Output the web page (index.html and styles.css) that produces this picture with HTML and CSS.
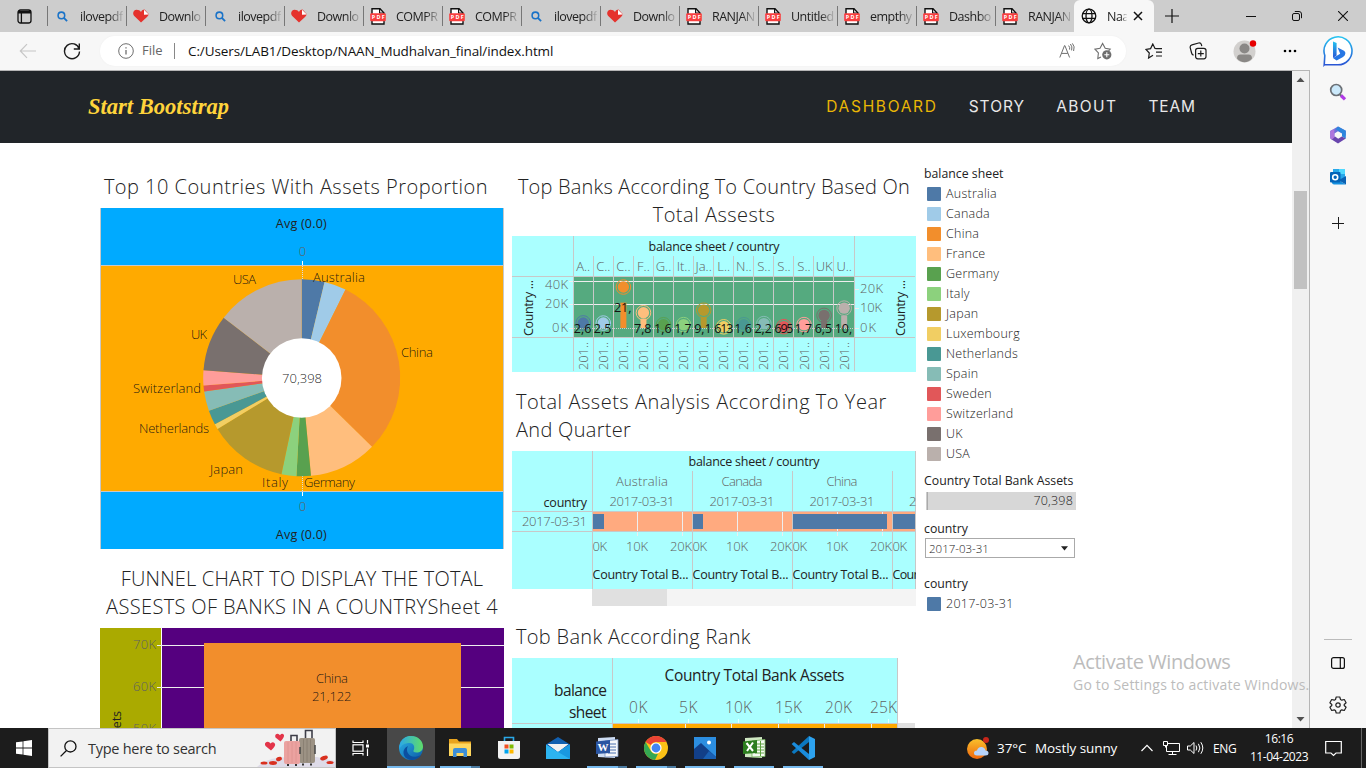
FILE: index.html
```html
<!DOCTYPE html>
<html lang="en">
<head>
<meta charset="utf-8">
<title>Naan Mudhalvan</title>
<link rel="stylesheet" href="styles.css">
</head>
<body>
<svg class="defs" width="0" height="0">
  <defs>
    <linearGradient id="gEdge" x1="0" y1="0" x2="1" y2="1"><stop offset="0" stop-color="#2bb4e8"/><stop offset="1" stop-color="#0c59a4"/></linearGradient>
    <linearGradient id="gEdge2" x1="0" y1="0" x2="1" y2="0"><stop offset="0" stop-color="#2ba8e8"/><stop offset="1" stop-color="#5fdc68"/></linearGradient>
    <linearGradient id="gBing" x1="0" y1="0" x2="0" y2="1"><stop offset="0" stop-color="#25c3f0"/><stop offset="1" stop-color="#2a55d4"/></linearGradient>
    <linearGradient id="gSun" x1="0" y1="0" x2="0" y2="1"><stop offset="0" stop-color="#f9c02c"/><stop offset="1" stop-color="#f0660c"/></linearGradient>
  </defs>
  <symbol id="search" viewBox="0 0 12 12"><circle cx="4.8" cy="4.8" r="3.6" fill="none" stroke="#1a73c8" stroke-width="1.7"/><path d="M7.5 7.5 11 11" stroke="#1a73c8" stroke-width="2"/></symbol>
  <symbol id="heart" viewBox="0 0 16 14"><path d="M8 13.6 1 6.8C-1 4 .8.8 3.6.8 5.6.8 7 1.6 8 3 9 1.4 10 .6 11.6.6L15.6 5C15.6 6.2 15 7 14 8z" fill="#e5322d"/><path d="M11 .8 15.8 5.4 11 5.8z" fill="#fff"/></symbol>
  <symbol id="pdf" viewBox="0 0 16 17"><path d="M2 .8h8L14 5v11H2z" fill="#fff" stroke="#111" stroke-width="1.4"/><path d="M9.6.8V5H14" fill="none" stroke="#111" stroke-width="1.2"/><rect x=".2" y="5.2" width="15.6" height="8" rx="1" fill="#f83f3f"/><text x="8" y="11.2" font-size="5.4" font-weight="700" fill="#fff" text-anchor="middle" textLength="12.6">PDF</text></symbol>
</svg>

<div class="tabstrip">
  <div class="tab-menu"><svg width="15" height="15" viewBox="0 0 15 15" fill="none" stroke="#111" stroke-width="1.3"><rect x="1" y="1" width="13" height="13" rx="2.5"/><path d="M1 3.2h13" stroke-width="2.6"/><path d="M4.4 4v10"/></svg></div>
  <div class="tab"><svg class="i-s"><use href="#search"/></svg><span>ilovepdf</span></div>
  <div class="tab"><svg class="i-h"><use href="#heart"/></svg><span>Downlo</span></div>
  <div class="tab"><svg class="i-s"><use href="#search"/></svg><span>ilovepdf</span></div>
  <div class="tab"><svg class="i-h"><use href="#heart"/></svg><span>Downlo</span></div>
  <div class="tab"><svg class="i-p"><use href="#pdf"/></svg><span>COMPR</span></div>
  <div class="tab"><svg class="i-p"><use href="#pdf"/></svg><span>COMPR</span></div>
  <div class="tab"><svg class="i-s"><use href="#search"/></svg><span>ilovepdf</span></div>
  <div class="tab"><svg class="i-h"><use href="#heart"/></svg><span>Downlo</span></div>
  <div class="tab"><svg class="i-p"><use href="#pdf"/></svg><span>RANJAN</span></div>
  <div class="tab"><svg class="i-p"><use href="#pdf"/></svg><span>Untitled</span></div>
  <div class="tab"><svg class="i-p"><use href="#pdf"/></svg><span>empthy</span></div>
  <div class="tab"><svg class="i-p"><use href="#pdf"/></svg><span>Dashbo</span></div>
  <div class="tab"><svg class="i-p"><use href="#pdf"/></svg><span>RANJAN</span></div>
  <div class="tab active">
    <svg width="16" height="16" viewBox="0 0 16 16" fill="none" stroke="#111" stroke-width="1.3"><circle cx="8" cy="8" r="6.8"/><ellipse cx="8" cy="8" rx="3" ry="6.8"/><path d="M1.6 5.7h12.8M1.6 10.3h12.8"/></svg>
    <span>Naa</span>
    <svg class="close" width="10" height="10" viewBox="0 0 10 10" stroke="#111" stroke-width="1.5"><path d="M1 1l8 8M9 1 1 9"/></svg>
  </div>
  <svg class="newtab" width="14" height="14" viewBox="0 0 14 14" stroke="#111" stroke-width="1.2"><path d="M7 0v14M0 7h14"/></svg>
  <div class="winctl">
    <svg width="10" height="10" viewBox="0 0 10 10"><path d="M0 5.5h10" stroke="#111"/></svg>
    <svg width="10" height="10" viewBox="0 0 10 10" fill="none" stroke="#111"><rect x=".5" y="2.5" width="7" height="7" rx="1.5"/><path d="M2.8.5H7Q9.5.5 9.5 3v4.2"/></svg>
    <svg width="10" height="10" viewBox="0 0 10 10" stroke="#111" stroke-width="1.1"><path d="M0 0l10 10M10 0 0 10"/></svg>
  </div>
</div>

<div class="window">
  <div class="main">
    <div class="toolbar">
      <svg class="back" width="18" height="16" viewBox="0 0 18 16" fill="none" stroke="#c6c6c6" stroke-width="1.2"><path d="M17 8H1.5M8 1.2 1.3 8 8 14.8"/></svg>
      <svg class="reload" width="18" height="18" viewBox="0 0 18 18" fill="none" stroke="#1b1b1b" stroke-width="1.4"><path d="M16.2 7A7.5 7.5 0 1 0 16.5 9.5M16.3 1.5V7h-5.5"/></svg>
      <div class="address">
        <svg width="16" height="16" viewBox="0 0 16 16" fill="none" stroke="#6e6e6e"><circle cx="8" cy="8" r="7.3"/><path d="M8 7v4.6M8 4.2v1.4" stroke-width="1.3"/></svg>
        <span class="scheme">File</span>
        <span class="url">C:/Users/LAB1/Desktop/NAAN_Mudhalvan_final/index.html</span>
        <svg class="read" width="16" height="16" viewBox="0 0 16 16" fill="none" stroke="#6e6e6e"><path d="M.8 14.5 5.5 2.6h.4l4.7 11.9M2.6 10.4h6.2M9.6 2.6q1.6 1.6 1 4M11.4 1q2.4 2.6 1.2 6.4M13.4.4q2.8 3 1.2 7.6"/></svg>
        <svg class="fav" width="18" height="18" viewBox="0 0 18 18" fill="none" stroke="#6e6e6e" stroke-width="1.1"><path d="M7 15 3.8 16.5 4.4 11 1 7.2l5-1L8.6 1.4 11.2 6.2l5 1-1.6 1.8"/><circle cx="12.8" cy="12.8" r="4.6" fill="#6e6e6e" stroke="none"/><path d="M12.8 10.3v5M10.3 12.8h5" stroke="#fff"/></svg>
      </div>
      <div class="tools">
        <svg width="18" height="16" viewBox="0 0 18 16" fill="none" stroke="#1b1b1b" stroke-width="1.2"><path d="M8 12.2 3.6 15l.7-5L1 6.4l4.6-.8L7.8 1 10 5.4l1.6.3M10.5 5.6H17M11 9.2h6M11 13h6"/></svg>
        <svg width="18" height="18" viewBox="0 0 18 18" fill="none" stroke="#1b1b1b" stroke-width="1.2"><rect x="6.6" y="6.4" width="10.4" height="10.4" rx="2.2"/><path d="M11.8 8.6v6M8.8 11.6h6M4.6 13.2Q3 12.8 2.6 11L1.2 5.6Q.8 3.4 3 2.8L9.6 1Q11.8.6 12.4 2.6l.4 1.6"/></svg>
        <svg width="24" height="24" viewBox="0 0 24 24"><circle cx="11.5" cy="12.5" r="11" fill="#d2d0ce"/><circle cx="11.5" cy="9.5" r="5" fill="#8a8886"/><path d="M4 19.5q0-4 3.6-4h7.8q3.6 0 3.6 4-3.3 3.8-7.5 3.8T4 19.5z" fill="#8a8886"/><circle cx="20" cy="4.5" r="3.2" fill="#e60000"/></svg>
        <svg width="14" height="4" viewBox="0 0 14 4"><circle cx="2" cy="2" r="1.3"/><circle cx="7" cy="2" r="1.3"/><circle cx="12" cy="2" r="1.3"/></svg>
      </div>
    </div>
    <div class="viewport">
      <div class="page">
        <nav class="nav">
          <svg class="brand" width="146" height="36" viewBox="0 0 146 36"><text x="1" y="25" textLength="141" lengthAdjust="spacingAndGlyphs">Start Bootstrap</text></svg>
          <div class="links"><a class="l1">DASHBOARD</a><a class="l2">STORY</a><a class="l3">ABOUT</a><a class="l4">TEAM</a></div>
        </nav>
        <div class="dash">
          <section class="col">
            <h2 class="t1">Top 10 Countries With Assets Proportion</h2>
            <svg class="chart" id="donut" width="404" height="341" viewBox="100 208 404 341">
              <rect x="100" y="208" width="404" height="341" fill="#0af"/>
              <rect x="100" y="265" width="404" height="227" fill="#fa0"/>
              <path d="M100.5 208v341M503.5 208v341M100 265.5h404M100 491.5h404" stroke="#c8c8c8"/>
              <path d="M302.5 266v14M302.5 476v15" stroke="#ddd" stroke-dasharray="1 1"/>
              <path d="M302.5 261v4M302.5 492v4" stroke="#fff"/>
              <g id="slices"></g>
              <circle cx="301.7" cy="378" r="39.8" fill="#fff"/>
              <g class="dark med" text-anchor="middle"><text x="301.3" y="228.4" textLength="51">Avg (0.0)</text><text x="301.3" y="539.4" textLength="51">Avg (0.0)</text></g>
              <g class="mut" text-anchor="middle"><text x="302.5" y="256">0</text><text x="302.5" y="511">0</text></g>
              <g class="on">
                <text x="233" y="284.3" textLength="23">USA</text><text x="313" y="281.5" textLength="52">Australia</text>
                <text x="191" y="339.3" textLength="16">UK</text><text x="401" y="357.3" textLength="32">China</text>
                <text x="133" y="393.3" textLength="68">Switzerland</text><text x="139" y="433.3" textLength="70">Netherlands</text>
                <text x="210" y="474.3" textLength="33">Japan</text><text x="262" y="486.5" textLength="26">Italy</text>
                <text x="304" y="486.5" textLength="51">Germany</text><text x="282" y="383" textLength="40">70,398</text>
              </g>
            </svg>
            <h2 class="t2"><span class="a">FUNNEL CHART TO DISPLAY THE TOTAL</span><br><span class="b">ASSESTS OF BANKS IN A COUNTRYSheet 4</span></h2>
            <svg class="chart" width="404" height="100" viewBox="100 628 404 100">
              <rect x="100" y="628" width="61" height="100" fill="#aa0"/><rect x="162" y="628" width="342" height="100" fill="#55007f"/>
              <path d="M157 645.5h347M157 687.5h347" stroke="#eee"/>
              <rect x="204" y="643" width="257" height="85" fill="#f28e2c"/>
              <g class="mut"><text x="133" y="649.4" textLength="23">70K</text><text x="133" y="691.4" textLength="23">60K</text><text x="133" y="733" textLength="23">50K</text></g>
              <g class="on"><text x="316" y="683.4" textLength="32">China</text><text x="312" y="701.4" textLength="39.5">21,122</text></g>
              <text class="dark med" transform="translate(120.5 711) rotate(-90)" text-anchor="end" textLength="148">Country Total Bank Assets</text>
            </svg>
          </section>
          <section class="col">
            <h2 class="t3"><span class="a">Top Banks According To Country Based On</span><br><span class="b">Total Assests</span></h2>
            <svg class="chart" width="404" height="136" viewBox="512 236 404 136">
              <rect x="512" y="236" width="404" height="136" fill="#aff"/>
              <rect x="574" y="277" width="281" height="60" fill="#55aa7f"/>
              <path d="M569 281.5h286M569 304.5h286M569 328.5h5M855 289.5h4M855 308.5h4M855 328.5h4" stroke="#eee"/>
              <path d="M574 328.5h281" stroke="#ccc" stroke-dasharray="1 1"/>
              <path d="M573.5 236v135M854.5 236v135M512 276.5h403M512 337.5h403" stroke="#c8c8c8"/>
              <g id="lollipops"></g>
              <text class="dark med" x="648.5" y="251.2" textLength="131">balance sheet / country</text>
              <g class="mut"><text x="545" y="289" textLength="23">40K</text><text x="545" y="308.3" textLength="23">20K</text><text x="552" y="332.3" textLength="16">0K</text><text x="860" y="293" textLength="23">20K</text><text x="860" y="312.3" textLength="22">10K</text><text x="860" y="332.3" textLength="16">0K</text></g>
              <g class="dark med"><text transform="translate(532.5 336) rotate(-90)" textLength="56">Country ...</text><text transform="translate(905 336) rotate(-90)" textLength="56">Country ...</text></g>
            </svg>
            <h2 class="t4"><span class="a">Total Assets Analysis According To Year</span><br><span class="b">And Quarter</span></h2>
            <svg class="chart" width="404" height="155" viewBox="512 451 404 155">
              <rect x="512" y="451" width="404" height="138" fill="#aff"/>
              <rect x="592" y="512" width="324" height="19" fill="#ffaa7f"/>
              <path d="M637.5 512v24M682.5 512v24M737.5 512v24M782.5 512v24M837.5 512v24M882.5 512v24" stroke="#eee"/>
              <g fill="#4e79a7"><rect x="593" y="514" width="11" height="15"/><rect x="693" y="514" width="10" height="15"/><rect x="793" y="514" width="94" height="15"/><rect x="893" y="514" width="23" height="15"/></g>
              <path d="M592.5 451v138M692.5 471v118M792.5 471v118M892.5 471v118M915.5 451v138M512 511.5h404M512 531.5h404" stroke="#c8c8c8"/>
              <text class="dark med" x="688.5" y="466.2" textLength="131">balance sheet / country</text>
              <text class="dark med" x="543.5" y="506.5" textLength="43.5">country</text>
              <g class="mut">
                <text x="522" y="526" textLength="65">2017-03-31</text>
                <text x="616" y="486" textLength="52">Australia</text><text x="721.5" y="486" textLength="41">Canada</text><text x="826.5" y="486" textLength="31">China</text>
                <text x="609.5" y="506" textLength="65">2017-03-31</text><text x="709.5" y="506" textLength="65">2017-03-31</text><text x="809.5" y="506" textLength="65">2017-03-31</text><text x="909" y="506">2</text>
                <text x="592.5" y="551" textLength="14.5">0K</text><text x="626" y="551" textLength="22">10K</text><text x="670" y="551" textLength="22">20K</text>
                <text x="692.5" y="551" textLength="14.5">0K</text><text x="726" y="551" textLength="22">10K</text><text x="770" y="551" textLength="22">20K</text>
                <text x="792.5" y="551" textLength="14.5">0K</text><text x="826" y="551" textLength="22">10K</text><text x="870" y="551" textLength="22">20K</text><text x="892.5" y="551" textLength="14.5">0K</text>
              </g>
              <g class="dark med"><text x="592.5" y="579" textLength="96">Country Total B...</text><text x="692.5" y="579" textLength="96">Country Total B...</text><text x="792.5" y="579" textLength="96">Country Total B...</text><text x="892.5" y="579" textLength="26">Cour</text></g>
              <rect x="512" y="589" width="404" height="17" fill="#fff"/><rect x="592" y="589" width="324" height="17" fill="#f4f4f4"/><rect x="592" y="589" width="75" height="17" fill="#e0e0e0"/>
            </svg>
            <h2 class="t5">Tob Bank According Rank</h2>
            <svg class="chart rank" width="404" height="70" viewBox="512 658 404 70">
              <rect x="512" y="658" width="386" height="70" fill="#aff"/>
              <rect x="613" y="724" width="285" height="4" fill="#fa0"/>
              <path d="M685.5 724v4M731.5 724v4M778.5 724v4M824.5 724v4M871.5 724v4" stroke="#eee"/>
              <path d="M638.5 719v4M688.5 719v4M738.5 719v4M788.5 719v4M838.5 719v4M888.5 719v4" stroke="#e4ffff"/>
              <path d="M612.5 658v70M897.5 658v70M512 723.5h386" stroke="#c8c8c8"/>
              <rect x="898" y="723" width="17" height="5" fill="#e0e0e0"/>
              <g class="dark med"><text x="664.5" y="681" textLength="180">Country Total Bank Assets</text><text x="554" y="696" textLength="53">balance</text><text x="569" y="718" textLength="37.5">sheet</text></g>
              <g class="mut"><text x="629" y="713" textLength="18.5">0K</text><text x="679" y="713" textLength="18.5">5K</text><text x="725" y="713" textLength="27">10K</text><text x="775" y="713" textLength="27">15K</text><text x="825" y="713" textLength="27">20K</text><text x="870" y="713" textLength="27">25K</text></g>
            </svg>
          </section>
          <aside class="legend">
            <h3>balance sheet</h3>
            <ul id="legend"></ul>
            <h3 class="mt1">Country Total Bank Assets</h3>
            <div class="scale">70,398</div>
            <h3 class="mt2">country</h3>
            <div class="select"><span>2017-03-31</span><svg width="7" height="5" viewBox="0 0 7 5"><path d="M0 .3h7L3.5 4.6z" fill="#222"/></svg></div>
            <h3 class="mt3">country</h3>
            <ul class="single"><li><i style="background:#4e79a7"></i>2017-03-31</li></ul>
          </aside>
        </div>
      </div>
      <div class="scrollbar">
        <svg width="9" height="5" viewBox="0 0 9 5"><path d="M.5 5h8L4.5.5z" fill="#505050"/></svg>
        <div class="thumb"></div>
        <svg class="down" width="9" height="5" viewBox="0 0 9 5"><path d="M.5 0h8L4.5 4.5z" fill="#505050"/></svg>
      </div>
      <div class="watermark"><p class="w1">Activate Windows</p><p class="w2">Go to Settings to activate Windows.</p></div>
    </div>
  </div>
  <div class="sidebar">
    <div><svg width="32" height="32" viewBox="0 0 32 32"><path d="M2.2 30 2.8 20.5A14 14 0 1 1 16 29.8H2.4z" fill="#fff" stroke="url(#gBing)" stroke-width="1.6"/><path d="M11 6.5 14.6 8v12.6L11 23z" fill="url(#gBing)"/><path d="M15.6 12.5 22 15.8q2.3 1.6.8 4.4-.7 1.2-2.2 2L14.6 25.6 11 23l7.2-4.2z" fill="#2676e4"/></svg></div>
    <div class="find"><svg width="18" height="18" viewBox="0 0 18 18"><path d="M10.5 11 13 13.500" stroke="#6b7076" stroke-width="2"/><path d="M12 12.500 16 16.400" stroke="#b03ae6" stroke-width="3.200"/><circle cx="7.2" cy="7" r="5.500" fill="#cbe9fb" stroke="#6b7076" stroke-width="1.700"/></svg></div>
    <div><svg width="18" height="18" viewBox="0 0 18 18"><path d="M9 .5 16.8 4.8v5l-4.6-2.7L9 5.3 5.4 7.4V14L1.2 12V5z" fill="#6f70d8"/><path d="M9 .5 16.8 4.8v8L13 10.6V7.2L6.6 3.2z" fill="#2d86dd"/><path d="M1.5 12.8 6 10.5 9.2 12.8l3.6-2.4 4 2.2L9 17.5z" fill="#6946ae"/><path d="M1.2 5 5.4 3v8.6L3 13.6l-1.8-1z" fill="#ae76dd"/></svg></div>
    <div><svg width="18" height="18" viewBox="0 0 18 18"><path d="M4 1h12v12H4z" fill="#28a8ea"/><path d="M10 1h6v5h-6z" fill="#50d9ff"/><path d="M3 8.5 17 16.6H5q-2 0-2-2z" fill="#1490df"/><path d="M17 8v8.6L9.5 12.3z" fill="#0a62b4"/><rect x="1" y="4" width="10.5" height="10.5" rx="1" fill="#0364b8"/><circle cx="6.2" cy="9.2" r="2.5" fill="none" stroke="#fff" stroke-width="1.6"/></svg></div>
    <div class="plus"><svg width="12" height="12" viewBox="0 0 12 12"><path d="M6.500 0v12M0 6.500h12" stroke="#1b1b1b"/></svg></div>
    <div class="bottom"><hr></div>
    <div><svg width="14" height="12" viewBox="0 0 14 12" fill="none" stroke="#111" stroke-width="1.2"><rect x=".6" y=".6" width="12.8" height="10.8" rx="2"/><path d="M9.3.6v10.8"/></svg></div>
    <div><svg width="18" height="18" viewBox="0 0 18 18" fill="none" stroke="#222" stroke-width="1.2"><circle cx="9" cy="9" r="2.2"/><path d="M7.2 1h3.6l.7 2.5 1.3.7 2.5-.7 1.8 3.2-1.9 1.8v1l1.9 1.8-1.8 3.2-2.5-.7-1.3.7-.7 2.5H7.2l-.7-2.5-1.3-.7-2.5.7-1.8-3.2 1.9-1.8v-1L.9 6.7l1.8-3.2 2.5.7 1.3-.7z" stroke-linejoin="round"/></svg></div>
  </div>
</div>

<div class="taskbar">
  <div class="start"><svg width="16" height="16" viewBox="0 0 16 16" fill="#fff"><path d="M0 2.3 6.6 1.4v6.2H0zM7.4 1.2 16 0v7.6H7.4zM0 8.4h6.6v6.2L0 13.7zM7.4 8.4H16V16l-8.6-1.2z"/></svg></div>
  <div class="search">
    <svg width="17" height="17" viewBox="0 0 17 17" fill="none" stroke="#111" stroke-width="1.3"><circle cx="10.4" cy="6.4" r="5.6"/><path d="M6.5 10.5.6 16.4"/></svg>
    <span>Type here to search</span>
    <svg class="art" width="78" height="38" viewBox="0 0 78 38">
      <path d="M0 38Q10 28 32 28T60 28L78 32v6z" fill="#dedbe8"/>
      <g fill="none" stroke="#3e3e48" stroke-width="1.6"><path d="M34 12V6.5h6V12M48.500 9V1.500h6.500V9"/></g>
      <rect x="42" y="9" width="16" height="25" rx="2" fill="#9c9284"/><path d="M46.500 10v23M50 10v23M53.500 10v23" stroke="#857b6f" stroke-width=".8"/><path d="M58 16v9" stroke="#444" stroke-width="1.500"/>
      <rect x="27" y="12" width="16" height="23" rx="2" fill="#eba2a0"/><path d="M31 13v21M35 13v21M39 13v21" stroke="#dd9391" stroke-width=".8"/><path d="M43 18v7" stroke="#444" stroke-width="1.500"/>
      <path d="M30 36h2M38 36h2M45 35.500h2M53 35.500h2" stroke="#333" stroke-width="2"/>
      <path d="M14 21.500 8.500 17q-1.500-3 1-4t4 1.500q3-2.500 4.600.5.600 2-4.100 6.500z" fill="#e3354a"/><path d="M23.500 12.500 18.500 8.500q-1-2.500 1-3.500t3.500 1.300Q25 3.600 27 6q.5 2-3.500 6.500z" fill="#e3354a"/>
      <g fill="#d9301f"><ellipse cx="7" cy="34" rx="3.500" ry="1.600"/><ellipse cx="16" cy="34" rx="4" ry="1.900"/><ellipse cx="22" cy="30" rx="3" ry="2" transform="rotate(-20 22 30)"/><ellipse cx="67" cy="29" rx="4" ry="2" transform="rotate(-20 67 29)"/><ellipse cx="73" cy="33.500" rx="3.500" ry="1.600"/></g>
    </svg>
  </div>
  <div class="taskview"><svg width="17" height="16" viewBox="0 0 17 16" fill="none" stroke="#fff" stroke-width="1.200"><path d="M1 .5v2h10v-2M1 15.500v-2h10v2M15.500 0v3.500M15.500 8.500V16"/><rect x="1" y="4.800" width="10" height="6.400"/><path d="M14 6h3" stroke-width="3"/></svg></div>
  <div class="apps">
    <div class="app on-edge"><svg width="26" height="26" viewBox="0 0 26 26"><circle cx="13" cy="13" r="12" fill="url(#gEdge)"/><path d="M2 9C4 3.500 8 1 13 1c7 0 12 5 12 10.500 0 4-3 6-6.500 6-2.500 0-3.500-1-3-2 1.500-2.500 1-7.500-4-7.500C7 8 3 10 1.500 14q-.500-3 .500-5z" fill="url(#gEdge2)"/><path d="M10 11c-3 5 1 12 8.500 10.500 2-.4 3.500-1 4.500-1.500-2 3.500-6 5-9.500 5C8 24.500 5.500 21 5.500 17.500S8 12 10 11z" fill="#0b4fa0"/></svg></div>
    <div class="app two"><svg width="24" height="22" viewBox="0 0 24 22"><path d="M1 2h8l2 2.500h12V19H1z" fill="#e9a41e"/><path d="M1 6.500h22V19H1z" fill="#ffd75e"/><path d="M5 20v-7q0-2 2-2h10q2 0 2 2v7h-3.500v-4h-7v4z" fill="#3e8fd8"/></svg></div>
    <div class="app none"><svg width="24" height="26" viewBox="0 0 24 26"><path d="M7.500 7V2.500h9V7" fill="none" stroke="#2aa8e8" stroke-width="1.600"/><path d="M1 6h22v15.500q0 2.500-2.500 2.500h-17Q1 24 1 21.500z" fill="#f3f3f3"/><path d="M7.500 9.500h4v4h-4z" fill="#f25022"/><path d="M12.500 9.500h4v4h-4z" fill="#7fba00"/><path d="M7.500 14.500h4v4h-4z" fill="#00a4ef"/><path d="M12.500 14.500h4v4h-4z" fill="#ffb900"/></svg></div>
    <div class="app none"><svg width="24" height="22" viewBox="0 0 24 22"><path d="M0 7.500 12 0l12 7.500v14H0z" fill="#1260b0"/><path d="M1.500 7h21L12 15z" fill="#f2f2f2"/><path d="M0 7.500 12 15l12-7.500V22H0z" fill="#2db4f0"/><path d="M12 15 24 7.500V22z" fill="#1998e0"/><path d="M2 7.200h20L12 14.500z" fill="#f2f2f2"/></svg></div>
    <div class="app two"><svg width="24" height="24" viewBox="0 0 24 24"><path d="M3 2 20 1v21L3 21z" fill="#cddcf2"/><path d="M10 5 23 3.500v17L10 21z" fill="#f5f7fb" stroke="#7894c4" stroke-width=".8"/><path d="M15 8h6M15 11h6M15 14h6M13 17h8" stroke="#4a70b0"/><path d="M1 5.500 15 4v13L1 18z" fill="#2a55a2"/><text x="8" y="15" text-anchor="middle" font-size="11" font-weight="700" fill="#fff" font-family="Liberation Serif">W</text></svg></div>
    <div class="app two"><svg width="24" height="24" viewBox="0 0 24 24"><circle cx="12" cy="12" r="12" fill="#fbc116"/><path d="M1.600 6A12 12 0 0 1 22.400 6H12a6 6 0 0 0-5.200 3z" fill="#ea4335"/><path d="M1.600 6 6.800 15A6 6 0 0 0 14 17.700L11 24A12 12 0 0 1 1.600 6z" fill="#34a853"/><circle cx="12" cy="12" r="5.600" fill="#fff"/><circle cx="12" cy="12" r="4.400" fill="#4285f4"/></svg></div>
    <div class="app"><svg width="22" height="22" viewBox="0 0 22 22"><path d="M0 0h22v22H0z" fill="#2c8ee0"/><path d="M0 12 7 6l15 14v2H0z" fill="#123f88"/><path d="m9 22 6-8 7 6v2z" fill="#1960b4"/><circle cx="15" cy="5.500" r="2" fill="#fff"/></svg></div>
    <div class="app"><svg width="24" height="24" viewBox="0 0 24 24"><path d="M3 2 20 1v21L3 21z" fill="#cfe8c2"/><path d="M10 5 23 3.500v17L10 21z" fill="#f5fbf3" stroke="#6fae55" stroke-width=".8"/><path d="M15 8h7M15 11h7M15 14h7M13 17h9M18.500 5v15" stroke="#5da13e"/><path d="M1 5.500 15 4v13L1 18z" fill="#2c7d1f"/><path d="m4.500 7 6.500 8M11 6.500 5 15" stroke="#fff" stroke-width="2"/></svg></div>
    <div class="app"><svg width="24" height="24" viewBox="0 0 24 24"><path d="M18 0 24 3v18l-6 3z" fill="#2da2ee"/><path d="M18 0v6L3 18 .6 16z" fill="#0b78c0"/><path d="M18 24v-6L3 6 .6 8z" fill="#1a8cdc"/></svg></div>
  </div>
  <div class="tray">
    <svg class="sun" width="24" height="24" viewBox="0 0 24 24"><circle cx="11" cy="13" r="10" fill="url(#gSun)"/><path d="M11 19.500q-3 0-3-2.500t3-2.500q1-4 5-3.500 3 .5 3.500 3.500 3 0 3 2.500t-3 2.500z" fill="#b5d2fb"/><circle cx="20" cy="4" r="3" fill="#c7261a"/></svg>
    <span class="deg">37°C</span><span class="sunny">Mostly sunny</span>
    <svg class="chev" width="12" height="8" viewBox="0 0 12 8" fill="none" stroke="#fff" stroke-width="1.200"><path d="M.5 7 6 1.300 11.500 7"/></svg>
    <svg class="net" width="17" height="14" viewBox="0 0 17 14" fill="none" stroke="#fff"><path d="M5 2.500h11.500v8H3.500V5M9.500 10.500v3M5.500 13.500h8M.5.500h4v4h-4zM2.500 4.500v2"/></svg>
    <svg class="vol" width="17" height="14" viewBox="0 0 17 14" fill="none" stroke="#fff"><path d="M.5 5h2.800L7 1.500v11L3.300 9H.500zM9 4.500q1.600 2.500 0 5M11.400 2.800q3 4.200 0 8.400M13.800 1.200q4 5.800 0 11.600"/></svg>
    <span class="eng">ENG</span>
    <div class="clock"><span class="time">16:16</span><span class="date">11-04-2023</span></div>
    <svg class="note" width="17" height="17" viewBox="0 0 17 17" fill="none" stroke="#fff" stroke-width="1.200"><path d="M.7 1.500h15.600v11.500H11L8.500 15.500 6 13H.7z"/></svg>
    <div class="peek"></div>
  </div>
</div>
<script src="charts.js"></script>
</body>
</html>
```
FILE: charts.js
```js
const banks = [
  ["Australia", 2620, "#4e79a7", "A..", "2,6"],
  ["Canada", 2550, "#a0cbe8", "C..", "2,5"],
  ["China", 21122, "#f28e2c", "C..", "21,"],
  ["France", 7850, "#ffbe7d", "F..", "7,8"],
  ["Germany", 1650, "#59a14f", "G..", "1,6"],
  ["Italy", 1730, "#8cd17d", "It..", "1,7"],
  ["Japan", 9160, "#b6992d", "Ja..", "9,1"],
  ["Luxembourg", 613, "#f1ce63", "L..", "613"],
  ["Netherlands", 1680, "#499894", "N..", "1,6"],
  ["Spain", 2250, "#86bcb6", "S..", "2,2"],
  ["Sweden", 695, "#e15759", "S..", "695"],
  ["Switzerland", 1740, "#ff9d9a", "S..", "1,7"],
  ["UK", 6500, "#79706e", "UK", "6,5"],
  ["USA", 10238, "#bab0ac", "U..", "10,"]
];
const total = banks.reduce((sum, b) => sum + b[1], 0);

// Donut slices, clockwise from twelve o'clock.
let angle = 0;
let slices = "";
for (const [, value, color] of banks) {
  const end = angle + value / total * Math.PI * 2;
  const point = a => (301.7 + 98.5 * Math.sin(a)).toFixed(2) + " " + (377.8 - 98.5 * Math.cos(a)).toFixed(2);
  slices += `<path d="M301.7 377.8L${point(angle)}A98.5 98.5 0 0 1 ${point(end)}Z" fill="${color}"/>`;
  angle = end;
}
document.getElementById("slices").innerHTML = slices;

// One bar, one ringed dot and one value label per country.
const step = 281 / banks.length;
let marks = "";
let headers = "";
banks.forEach(([, value, color, short, label], i) => {
  const x = 573.5 + i * step;
  const cx = x + step / 2 - 0.3;
  const barTop = 328 - value / 20000 * 24;
  const dotY = 328 - value / 10000 * 19.4;
  if (i) marks += `<path d="M${Math.round(x) - 0.5} 256v115" stroke="#c8c8c8"/>`;
  marks += `<rect x="${cx - 3}" y="${barTop}" width="6" height="${328 - barTop}" fill="${color}"/>`;
  marks += `<circle cx="${cx}" cy="${dotY}" r="5.7" fill="${color}"/><circle cx="${cx}" cy="${dotY}" r="7.3" fill="none" stroke="${color}" stroke-width="1"/>`;
  const labelY = value > 20000 ? 312 : 332.5;
  marks += `<text class="val" x="${x + 0.3}" y="${labelY}" textLength="${label.includes(",") ? 17.5 : 19}">${label}</text>`;
  headers += `<text x="${cx}" y="271" text-anchor="middle">${short}</text>`;
  headers += `<text transform="translate(${cx + 4.5} 370) rotate(-90)" textLength="28">201..</text>`;
});
document.getElementById("lollipops").innerHTML = marks + `<g class="mut">${headers}</g>`;

document.getElementById("legend").innerHTML = banks
  .map(([name, , color]) => `<li><i style="background:${color}"></i>${name}</li>`).join("");
```
FILE: styles.css
```css
* { box-sizing: border-box; }
body { margin: 0; width: 1366px; height: 768px; overflow: hidden; display: flex; flex-direction: column; background: #fff; font-family: "Open Sans", "Noto Sans", sans-serif; font-size: 12.5px; color: #222; }
svg { display: block; flex: none; }
.defs { position: absolute; }
h2, h3, p, ul { margin: 0; padding: 0; font-weight: 400; list-style: none; }

.tabstrip { height: 32px; flex: none; background: #cdcdcd; display: flex; align-items: center; }
.tab-menu { width: 47px; padding-left: 17px; }
.tab { width: 79px; height: 20px; border-left: 1px solid #777; display: flex; align-items: center; font-size: 12.5px; letter-spacing: -0.5px; white-space: nowrap; }
.tab span { width: 43px; overflow: hidden; -webkit-mask: linear-gradient(90deg, #000 68%, transparent 105%); mask: linear-gradient(90deg, #000 68%, transparent 105%); }
.i-s { width: 11px; height: 11px; margin: 0 12px 0 9px; }
.i-h { width: 16px; height: 14px; margin: 0 10px 0 6px; }
.i-p { width: 16px; height: 17px; margin: 0 10px 0 6px; }
.tab.active { width: 80px; height: 32px; border: 0; background: #f7f7f7; border-radius: 6px 6px 0 0; padding-left: 7px; }
.tab.active span { width: 20px; margin-left: 10px; }
.tab.active .close { margin-left: 6px; }
.newtab { margin-left: 11px; }
.winctl { margin-left: auto; padding-right: 18px; display: flex; gap: 36px; }

.window { height: 696px; display: flex; background: #f7f7f7; }
.main { width: 1310px; display: flex; flex-direction: column; }
.toolbar { height: 38px; display: flex; align-items: center; padding-left: 19px; }
.reload { margin-left: 26px; }
.address { margin-left: 19px; width: 1026px; height: 30px; border-radius: 15px; background: #fff; display: flex; align-items: center; padding-left: 18px; box-shadow: 0 0 2px #eee; }
.scheme { margin-left: 8px; width: 33px; height: 16px; line-height: 15px; border-right: 1px solid #888; color: #666; font-size: 13px; }
.url { margin-left: 13px; font-size: 13.5px; letter-spacing: -0.1px; color: #111; }
.read { margin-left: auto; }
.fav { margin: 0 14px 0 19px; }
.tools { display: flex; align-items: center; margin-left: 19px; width: 152px; justify-content: space-between; }

.viewport { flex: 1; border-top: 1px solid #b5b5b5; border-right: 1px solid #b5b5b5; display: flex; position: relative; overflow: hidden; }
.page { width: 1292px; height: 657px; background: #fff; overflow: hidden; }
.nav { height: 72px; background: #212529; display: flex; justify-content: space-between; align-items: center; padding: 0 96px 0 87px; }
.brand text { font: italic 700 23px "Liberation Serif", serif; fill: #ffd43b; }
.links { display: flex; gap: 31px; font-family: Inter, sans-serif; font-size: 15.5px; color: #e8e8e8; padding-bottom: 1px; }
.links .l1 { color: #eab705; letter-spacing: 1.7px; }
.links .l2 { letter-spacing: 1px; }
.links .l3 { letter-spacing: 1.4px; }
.links .l4 { letter-spacing: .9px; }

.dash { display: flex; gap: 8px; padding: 29px 0 0 100px; }
.col { width: 404px; }
h2 { font-family: "Open Sans", sans-serif; font-weight: 300; font-size: 20px; line-height: 28px; height: 64px; padding-top: .6px; white-space: nowrap; color: #222; text-align: center; }
.t1, .t5 { height: 36px; }
.t1 { padding-right: 12px; letter-spacing: .47px; }
.t2, .t4 { margin-top: 15px; }
.t2 .a { letter-spacing: .18px; }
.t2 .b { letter-spacing: .36px; }
.t3 .a { letter-spacing: .2px; }
.t3 .b { letter-spacing: .5px; }
.t5 { margin-top: 16px; letter-spacing: .32px; }
.t4 { letter-spacing: .53px; }
.t4 .b { letter-spacing: .3px; }
.t4, .t5 { text-align: left; padding-left: 4px; }
.chart text { font-family: "Open Sans", sans-serif; font-size: 12.5px; }
.chart .dark text, .chart text.dark { fill: #222; }
.chart .mut text { fill: #606060; font-weight: 300; font-size: 13px; }
.chart .on text { fill: #111; fill-opacity: .95; font-weight: 300; font-size: 13px; }
.chart text.val { fill: #111; font-size: 12.5px; font-weight: 400; }
.chart.rank text { font-size: 15.5px; }
.chart.rank .mut text { font-size: 15.5px; }

.legend { width: 160px; margin-top: -8px; }
h3 { font-size: 12.3px; line-height: 20px; color: #222; white-space: nowrap; }
.legend li { height: 20px; display: flex; align-items: center; gap: 5px; padding-left: 3px; font-size: 12.5px; font-weight: 300; letter-spacing: .25px; line-height: 18px; color: #222; }
.legend i { width: 14px; height: 14px; border-radius: 1px; }
.mt1 { margin-top: 7px; }
.scale { margin: 1px 0 0 2px; width: 150px; height: 18px; background: #d7d7d7; border-left: 1px solid #ccc; box-shadow: inset 1px 0 #aaa; text-align: right; line-height: 17px; padding-right: 3px; font-weight: 300; letter-spacing: .2px; color: #222; }
.mt2 { margin-top: 9px; }
.select { margin: -1px 0 0 1px; width: 150px; height: 20px; border: 1px solid #aaa; display: flex; align-items: center; justify-content: space-between; padding: 0 6px 0 3px; font-size: 11.5px; font-weight: 300; }
.mt3 { margin-top: 16px; }

.scrollbar { width: 17px; background: #f0f0f0; display: flex; flex-direction: column; align-items: center; padding: 6px 0; }
.thumb { width: 13px; height: 98px; background: #c1c1c1; margin-top: 109px; }
.down { margin-top: auto; }
.watermark { position: absolute; left: 1073px; top: 577px; color: #bcbcbc; white-space: nowrap; }
.w1 { font-size: 20px; line-height: 28px; letter-spacing: -.42px; }
.w2 { font-size: 14px; line-height: 18px; letter-spacing: .2px; }

.sidebar { width: 56px; display: flex; flex-direction: column; margin-top: -2px; padding-bottom: 2px; }
.sidebar > div { height: 42px; display: flex; align-items: center; justify-content: center; }
.sidebar .find { padding-bottom: 2px; }
.sidebar .plus { padding-top: 8px; }
.sidebar .bottom { margin-top: auto; height: 6px; }
.sidebar hr { width: 28px; height: 1px; border: 0; background: #bbb; margin: 0; }

.taskbar { height: 40px; background: #1c1c1c; color: #fff; display: flex; }
.start { width: 48px; display: grid; place-items: center; }
.search { width: 288px; background: #f2f2f2; border: 1px solid #c4c4c4; display: flex; align-items: center; padding-left: 11px; color: #333; font-size: 14.5px; letter-spacing: -.27px; }
.search span { margin-left: 11px; white-space: nowrap; }
.art { margin-left: auto; }
.taskview { width: 51px; padding-right: 3px; display: grid; place-items: center; }
.apps { display: flex; gap: 1px; }
.app { width: 48px; height: 40px; display: grid; place-items: center; background: linear-gradient(#76b9ed, #76b9ed) 4px 38px / 40px 2px no-repeat; }
.app.none { background: none; }
.app.on-edge { background: linear-gradient(#76b9ed, #76b9ed) 0 38px / 48px 2px no-repeat #484848; }
.app.two { background: linear-gradient(90deg, #76b9ed 31px, #4b7aa0 31px) 4px 38px / 40px 2px no-repeat; }
.tray { margin-left: auto; display: flex; align-items: center; width: 400px; font-size: 13.5px; letter-spacing: -.08px; white-space: nowrap; }
.deg { width: 38px; margin-left: 7px; }
.sunny { width: 106px; }
.net { margin-left: 10px; }
.vol { margin-left: 7px; }
.eng { margin-left: 9px; width: 34px; font-size: 12px; letter-spacing: -.3px; }
.clock { width: 64px; display: flex; flex-direction: column; align-items: center; font-size: 12px; line-height: 18px; letter-spacing: -.45px; }
.note { margin-left: 14px; }
.peek { width: 1px; height: 40px; background: #666; margin: 0 4px 0 auto; }
```
